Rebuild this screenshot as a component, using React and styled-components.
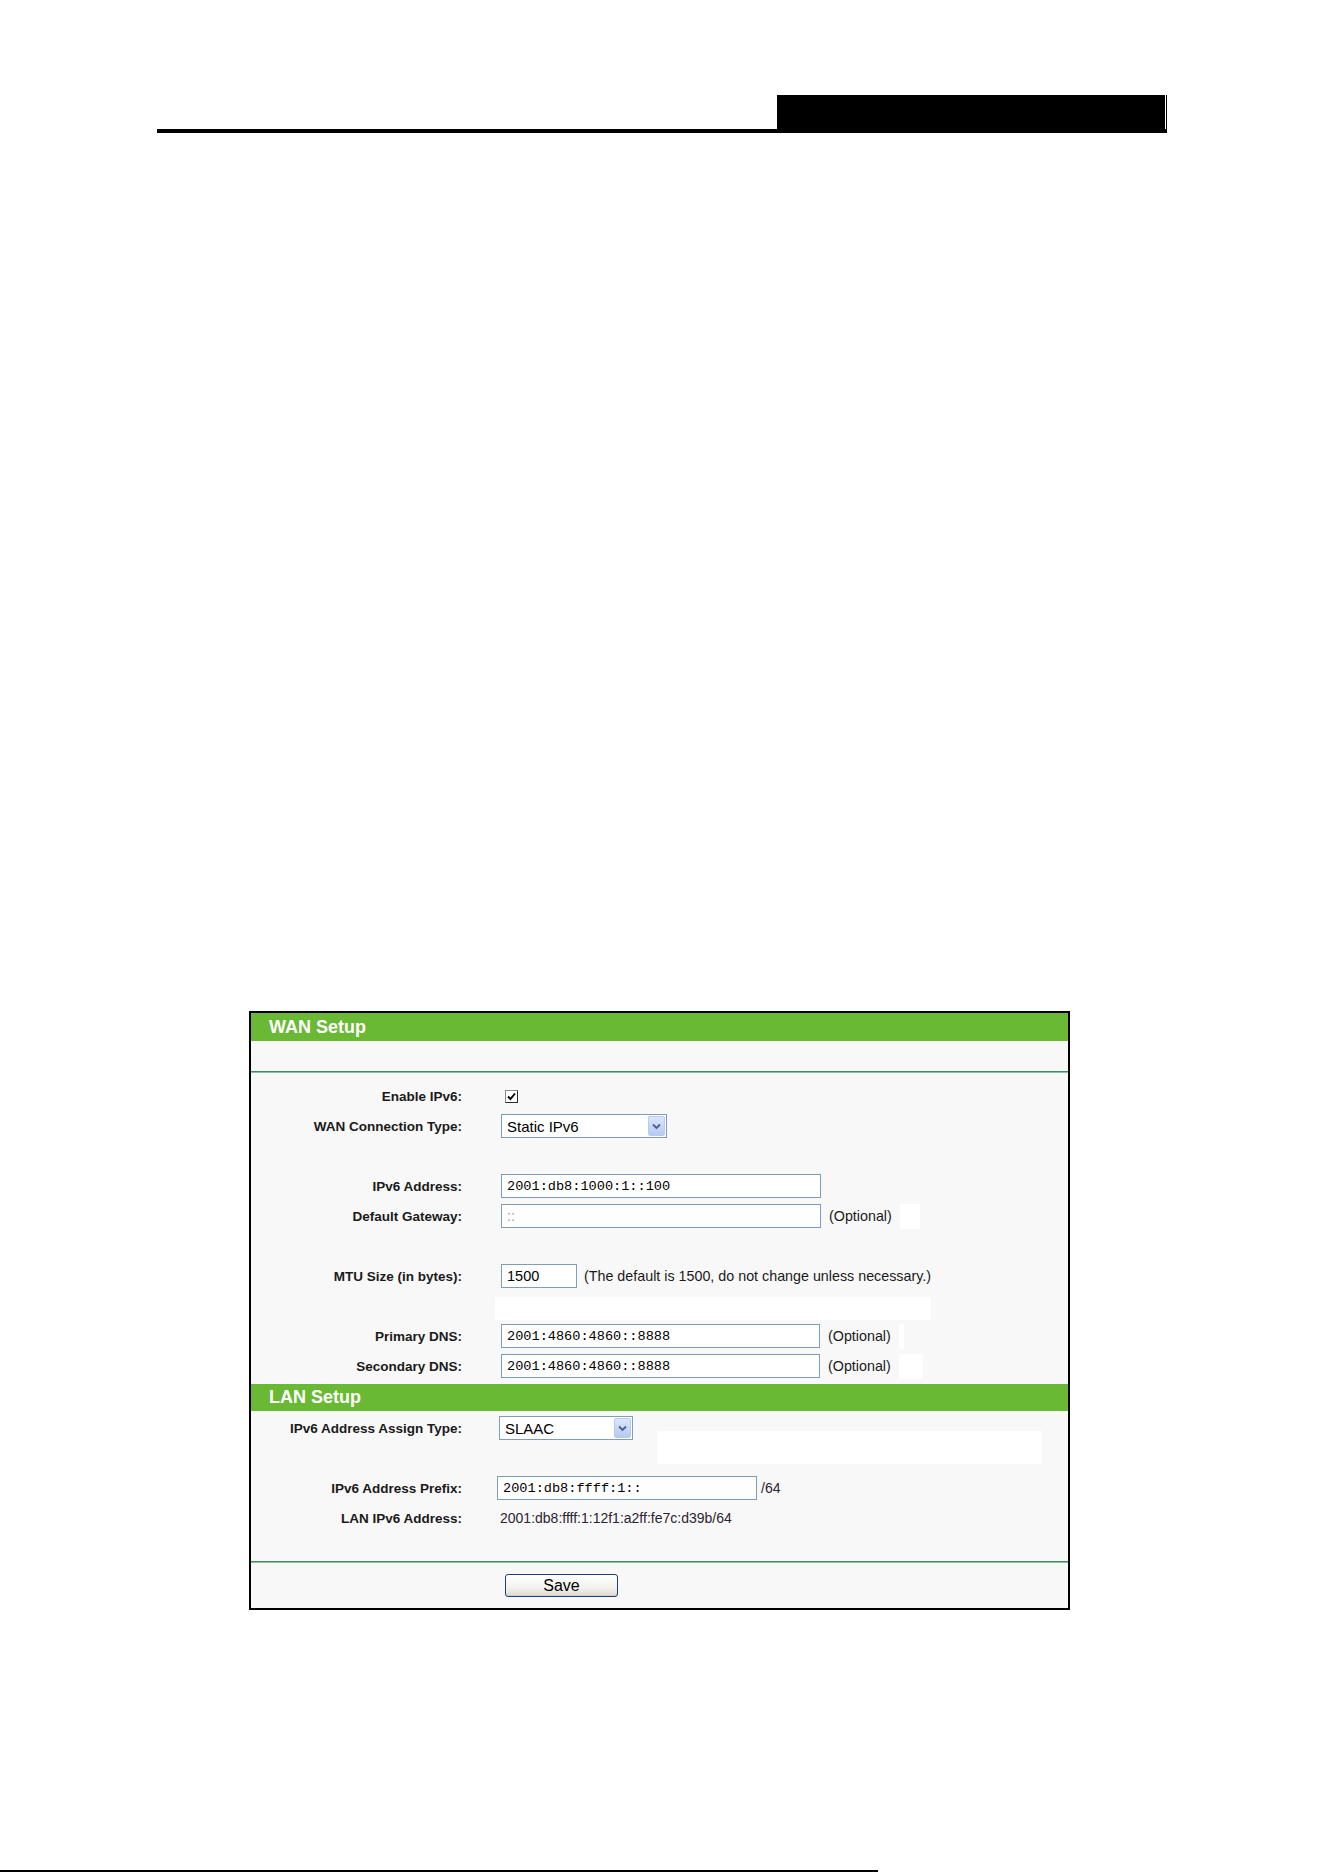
import React from 'react';
import styled, { createGlobalStyle } from 'styled-components';

const GlobalStyle = createGlobalStyle`
  html, body {
    margin: 0;
    padding: 0;
    background: #fff;
  }
  body {
    font-family: 'Liberation Sans', Arial, sans-serif;
    color: #1a1a1a;
  }
`;

const Page = styled.div`
  width: 1324px;
  height: 1872px;
  display: flex;
  flex-direction: column;
  overflow: hidden;
`;

const HeaderBar = styled.div`
  margin: 95px 0 0 157px;
  width: 1010px;
  display: flex;
  justify-content: flex-end;
  border-bottom: 4px solid #000;
`;

const HeaderTab = styled.div`
  width: 390px;
  height: 34px;
  background: #000;
  box-shadow: inset -1px 0 0 #000, inset -2px 0 0 #fff;
`;

const Panel = styled.div`
  margin: 878px 0 0 249px;
  width: 821px;
  box-sizing: border-box;
  border: 2px solid #000;
  background: #f8f8f8;
`;

const SectionTitle = styled.div`
  height: ${(p) => p.$h}px;
  background: #69b934;
  color: #fff;
  font-weight: bold;
  font-size: 18px;
  line-height: ${(p) => p.$h}px;
  padding-left: 18px;
`;

const Spacer = styled.div`
  height: ${(p) => p.$h}px;
`;

const Divider = styled.div`
  height: 2px;
  background: linear-gradient(#3f8c5f 50%, #8dbfa2 50%);
`;

const Rows = styled.div`
  padding: ${(p) => p.$top}px 0 ${(p) => p.$bottom}px;
`;

const Row = styled.div`
  height: 30px;
  display: grid;
  grid-template-columns: 211px 1fr;
  grid-template-rows: minmax(0, 1fr);
  column-gap: 39px;
  align-items: center;
`;

const Label = styled.div`
  text-align: right;
  font-weight: bold;
  font-size: 13.5px;
  color: #1a1a1a;
  white-space: nowrap;
`;

const Control = styled.div`
  display: flex;
  align-items: center;
  gap: ${(p) => (p.$gap != null ? p.$gap : 8)}px;
  margin-left: ${(p) => p.$shift || 0}px;
  align-self: stretch;
  min-height: 0;
`;

const Note = styled.span`
  font-size: 14.3px;
  color: #1a1a1a;
  white-space: nowrap;
`;

const Value = styled.span`
  font-size: 14px;
  color: #2b2433;
  white-space: nowrap;
`;

const Field = styled.input`
  box-sizing: border-box;
  width: ${(p) => p.$w}px;
  height: 24px;
  margin: 0;
  padding: 0 5px;
  border: 1px solid #7f9db9;
  background: #fff;
  color: ${(p) => (p.$muted ? '#9a9a9a' : '#000')};
  font-family: ${(p) =>
    p.$mono ? "'Liberation Mono', 'Courier New', monospace" : "'Liberation Sans', Arial, sans-serif"};
  font-size: ${(p) => (p.$mono ? 13.6 : 14.5)}px;
  outline: none;
  flex-shrink: 0;
`;

const SelectWrap = styled.div`
  position: relative;
  width: ${(p) => p.$w}px;
  height: 24px;
  flex-shrink: 0;
`;

const Select = styled.select`
  appearance: none;
  box-sizing: border-box;
  width: 100%;
  height: 100%;
  margin: 0;
  padding: 0 0 0 5px;
  border: 1px solid #7f9db9;
  background: #fff;
  color: #000;
  font-family: 'Liberation Sans', Arial, sans-serif;
  font-size: 15px;
`;

const Arrow = styled.span`
  position: absolute;
  top: 2px;
  right: 2px;
  width: 17px;
  height: 20px;
  box-sizing: border-box;
  border: 1px solid #b6cbf2;
  border-radius: 2px;
  background: linear-gradient(#dae6fc, #b4c9f3);
  display: flex;
  align-items: center;
  justify-content: center;
  pointer-events: none;
`;

const Check = styled.span`
  width: 13px;
  height: 13px;
  box-sizing: border-box;
  border: 1px solid #2b2b2b;
  border-left-color: #8a8a8a;
  border-top-color: #8a8a8a;
  background: #fff;
  display: flex;
  align-items: center;
  justify-content: center;
  margin-left: 4px;
`;

const WhiteBlock = styled.div`
  width: ${(p) => p.$w}px;
  height: ${(p) => p.$h}px;
  background: #fff;
  align-self: ${(p) => (p.$mt != null ? 'flex-start' : 'center')};
  margin-top: ${(p) => p.$mt || 0}px;
  margin-left: ${(p) => p.$dx || 0}px;
  flex-shrink: 0;
`;

const Footer = styled.div`
  height: 45px;
  display: grid;
  grid-template-columns: 211px 1fr;
  column-gap: 39px;
  align-items: center;
`;

const SaveButton = styled.button`
  margin-left: 4px;
  width: 113px;
  height: 23px;
  padding: 0;
  border: 1px solid #1e3f7c;
  border-radius: 3px;
  background: linear-gradient(#ffffff, #f3f2ee 60%, #dedad0);
  box-shadow: inset 0 -1px 0 #d2cfc4;
  color: #000;
  font-family: 'Liberation Sans', Arial, sans-serif;
  font-size: 16px;
  line-height: 21px;
`;

const BottomRule = styled.div`
  margin-top: auto;
  width: 878px;
  height: 2px;
  background: #000;
`;

const Chevron = () => (
  <svg width="9" height="7" viewBox="0 0 9 7">
    <path d="M1 1.5 L4.5 5 L8 1.5" fill="none" stroke="#4b5f88" strokeWidth="1.8" />
  </svg>
);

const Tick = () => (
  <svg width="9" height="9" viewBox="0 0 9 9">
    <path d="M1 4.5 L3.4 7 L8 1.5" fill="none" stroke="#000" strokeWidth="1.9" />
  </svg>
);

const Dropdown = ({ w, value }) => (
  <SelectWrap $w={w}>
    <Select defaultValue={value}>
      <option>{value}</option>
    </Select>
    <Arrow>
      <Chevron />
    </Arrow>
  </SelectWrap>
);

export default function App() {
  return (
    <Page>
      <GlobalStyle />
      <HeaderBar>
        <HeaderTab />
      </HeaderBar>

      <Panel>
        <SectionTitle $h={28}>WAN Setup</SectionTitle>
        <Spacer $h={30} />
        <Divider />
        <Rows $top={8} $bottom={3}>
          <Row>
            <Label>Enable IPv6:</Label>
            <Control>
              <Check>
                <Tick />
              </Check>
            </Control>
          </Row>
          <Row>
            <Label>WAN Connection Type:</Label>
            <Control>
              <Dropdown w={166} value="Static IPv6" />
            </Control>
          </Row>
          <Row />
          <Row>
            <Label>IPv6 Address:</Label>
            <Control>
              <Field $w={320} $mono readOnly value="2001:db8:1000:1::100" />
            </Control>
          </Row>
          <Row>
            <Label>Default Gateway:</Label>
            <Control>
              <Field $w={320} $muted readOnly value="::" />
              <Note>(Optional)</Note>
              <WhiteBlock $w={20} $h={25} />
            </Control>
          </Row>
          <Row />
          <Row>
            <Label>MTU Size (in bytes):</Label>
            <Control $gap={7}>
              <Field $w={76} readOnly value="1500" />
              <Note>(The default is 1500, do not change unless necessary.)</Note>
            </Control>
          </Row>
          <Row>
            <span />
            <Control>
              <WhiteBlock $w={436} $h={23} $mt={6} $dx={-6} />
            </Control>
          </Row>
          <Row>
            <Label>Primary DNS:</Label>
            <Control>
              <Field $w={319} $mono readOnly value="2001:4860:4860::8888" />
              <Note>(Optional)</Note>
              <WhiteBlock $w={5} $h={25} />
            </Control>
          </Row>
          <Row>
            <Label>Secondary DNS:</Label>
            <Control>
              <Field $w={319} $mono readOnly value="2001:4860:4860::8888" />
              <Note>(Optional)</Note>
              <WhiteBlock $w={24} $h={25} />
            </Control>
          </Row>
        </Rows>

        <SectionTitle $h={27}>LAN Setup</SectionTitle>
        <Rows $top={2} $bottom={28}>
          <Row>
            <Label>IPv6 Address Assign Type:</Label>
            <Control $shift={-2} $gap={24}>
              <Dropdown w={134} value="SLAAC" />
              <WhiteBlock $w={385} $h={33} $mt={18} />
            </Control>
          </Row>
          <Row />
          <Row>
            <Label>IPv6 Address Prefix:</Label>
            <Control $shift={-4} $gap={4}>
              <Field $w={260} $mono readOnly value="2001:db8:ffff:1::" />
              <Value>/64</Value>
            </Control>
          </Row>
          <Row>
            <Label>LAN IPv6 Address:</Label>
            <Control $shift={-1}>
              <Value>2001:db8:ffff:1:12f1:a2ff:fe7c:d39b/64</Value>
            </Control>
          </Row>
        </Rows>
        <Divider />
        <Footer>
          <span />
          <div>
            <SaveButton type="button">Save</SaveButton>
          </div>
        </Footer>
      </Panel>

      <BottomRule />
    </Page>
  );
}
